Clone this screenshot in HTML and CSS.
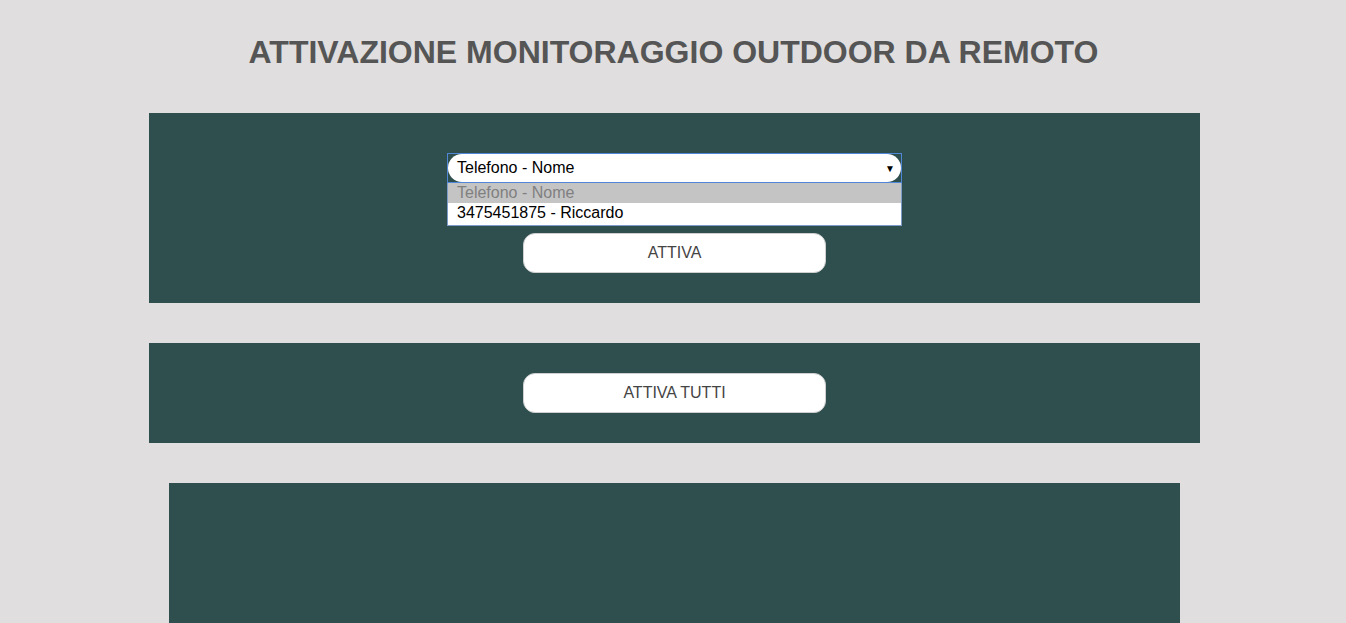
FILE: index.html
```html
<!DOCTYPE html>
<html lang="it">
<head>
<meta charset="utf-8">
<title>Attivazione monitoraggio outdoor da remoto</title>
<link rel="stylesheet" href="styles.css">
</head>
<body>
<h1 class="title">ATTIVAZIONE MONITORAGGIO OUTDOOR DA REMOTO</h1>
<section class="panel panel-select">
  <div class="select-wrap">
    <div class="select">
      <span class="select-value">Telefono - Nome</span>
      <span class="select-arrow">&#9660;</span>
    </div>
    <ul class="dropdown">
      <li class="option option-selected">Telefono - Nome</li>
      <li class="option">3475451875 - Riccardo</li>
    </ul>
  </div>
  <button class="btn">ATTIVA</button>
</section>
<section class="panel panel-all">
  <button class="btn">ATTIVA TUTTI</button>
</section>
<section class="panel panel-list"></section>
</body>
</html>
```

FILE: styles.css
```css
html, body {
  margin: 0;
  padding: 0;
}
body {
  background: #e0dede;
  font-family: "Liberation Sans", Arial, sans-serif;
  display: flex;
  flex-direction: column;
  align-items: center;
  overflow: hidden;
  height: 623px;
}
.title {
  margin: 34px 0 43px 1px;
  font-size: 32px;
  line-height: 36px;
  font-weight: bold;
  color: #555555;
}
.panel {
  background: #2f4f4f;
  display: flex;
  flex-direction: column;
  align-items: center;
  box-sizing: border-box;
  flex-shrink: 0;
}
.panel-select {
  width: 1051px;
  height: 190px;
  margin-left: 3px;
  padding-top: 40px;
  gap: 50px;
}
.panel-all {
  width: 1051px;
  height: 100px;
  margin-top: 40px;
  margin-left: 3px;
  justify-content: center;
}
.panel-list {
  width: 1011px;
  height: 140px;
  margin-top: 40px;
  margin-left: 3px;
}
.select-wrap {
  position: relative;
  width: 455px;
  height: 30px;
}
.select {
  box-sizing: border-box;
  height: 30px;
  border: 1px solid #4f86d6;
  display: flex;
  align-items: center;
  position: relative;
}
.select::after {
  content: "";
  position: absolute;
  inset: 0;
  background: #ffffff;
  border-radius: 14px;
}
.select-value, .select-arrow {
  position: relative;
  z-index: 1;
}
.select-value {
  padding-left: 9px;
  font-size: 16px;
  color: #000000;
  flex: 1;
}
.select-arrow {
  font-size: 10px;
  color: #000;
  margin-right: 6px;
}
.dropdown {
  position: absolute;
  top: 30px;
  left: 0;
  width: 455px;
  box-sizing: border-box;
  margin: 0;
  padding: 0 0 2px;
  list-style: none;
  background: #ffffff;
  border: 1px solid #7d9bc8;
  border-top: none;
  z-index: 5;
}
.option {
  font-size: 16px;
  line-height: 20px;
  height: 20px;
  padding-left: 9px;
  color: #000000;
}
.option-selected {
  background: #c4c4c4;
  color: #808080;
}
.btn {
  width: 303px;
  height: 40px;
  border: 1px solid #cfcfcf;
  border-radius: 12px;
  background: #ffffff;
  color: #444444;
  font-family: "Liberation Sans", Arial, sans-serif;
  font-size: 16px;
  padding: 0;
}
```
